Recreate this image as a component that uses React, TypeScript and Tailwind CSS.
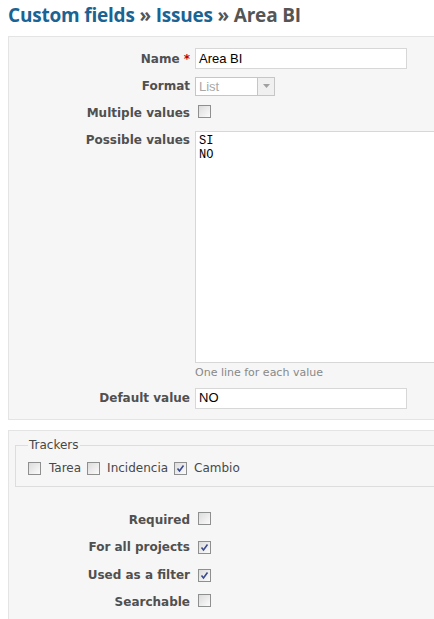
import React from 'react'

const font = { fontFamily: '"DejaVu Sans", Verdana, sans-serif' }

function Check({ checked = false }: { checked?: boolean }) {
  return (
    <span className="inline-flex h-[13px] w-[13px] shrink-0 items-center justify-center border border-[#8e8f8f] bg-gradient-to-br from-[#dcdcdc] to-[#fbfbfb]">
      {checked && (
        <svg width="9" height="9" viewBox="0 0 9 9">
          <path d="M1.5 4.5 L3.5 7 L7.5 1.5" fill="none" stroke="#3b4a8c" strokeWidth="1.6" />
        </svg>
      )}
    </span>
  )
}

function Row({ label, children, required, className = 'h-[27px] items-center' }: { label: string; children: React.ReactNode; required?: boolean; className?: string }) {
  return (
    <div className={`flex ${className}`}>
      <label className="w-[175px] shrink-0 pr-0 text-right text-[12px] font-bold text-[#505050]">
        {label}
        {required && <span className="text-[#bb0000]"> *</span>}
      </label>
      <div className="ml-[5px] flex items-center">{children}</div>
    </div>
  )
}

const flags = [
  { label: 'Required', checked: false },
  { label: 'For all projects', checked: true },
  { label: 'Used as a filter', checked: true },
  { label: 'Searchable', checked: false },
]

export default function App() {
  return (
    <div className="h-[619px] w-[434px] overflow-hidden bg-white" style={font}>
      <h2 className="px-[8px] pt-[3px] text-[19px] leading-[24px] font-bold tracking-[-0.2px] text-[#555]" style={{ fontFamily: '"Open Sans", sans-serif' }}>
        <span className="text-[#1b6393]">Custom fields</span>
        <span> » </span>
        <span className="text-[#1b6393]">Issues</span>
        <span> » Area BI</span>
      </h2>

      {/* main box */}
      <div className="ml-[8px] mt-[9px] w-[480px] border border-[#e4e4e4] bg-[#f6f6f6] pt-[8px] pb-[7px] pl-[6px]">
        <Row label="Name" required>
          <div className="flex h-[21px] w-[212px] items-center border border-[#d7d7d7] bg-white px-[3px] text-[13px] text-black" style={{ fontFamily: '"Liberation Sans", Arial, sans-serif' }}>
            Area BI
          </div>
        </Row>
        <Row label="Format" className="h-[28px] items-center">
          <div className="flex h-[19px] w-[80px] border border-[#c6c6c6] bg-white" style={{ fontFamily: '"Liberation Sans", Arial, sans-serif' }}>
            <span className="flex-1 px-[3px] text-[13px] leading-[17px] text-[#a8a8a8]">List</span>
            <span className="flex w-[17px] items-center justify-center border-l border-[#c6c6c6] bg-[#f0f0f0]">
              <svg width="7" height="4" viewBox="0 0 7 4"><path d="M0 0 H7 L3.5 4 Z" fill="#a0a0a0" /></svg>
            </span>
          </div>
        </Row>
        <Row label="Multiple values" className="h-[26px] items-center">
          <span className="ml-[3px]"><Check /></span>
        </Row>
        <Row label="Possible values" className="items-start pt-[5px]">
          <div className="flex flex-col">
            <div className="h-[232px] w-[280px] border border-[#d7d7d7] bg-white px-[3px] pt-[2px] text-[12px] leading-[14px] text-black" style={{ fontFamily: '"Liberation Mono", "Courier New", monospace' }}>
              <div>SI</div>
              <div>NO</div>
            </div>
          </div>
        </Row>
        <div className="ml-[180px] mt-[3px] text-[11px] leading-[14px] text-[#888]">One line for each value</div>
        <Row label="Default value" className="mt-[4px] h-[28px] items-center">
          <div className="flex h-[21px] w-[212px] items-center border border-[#d7d7d7] bg-white px-[3px] text-[13px] text-black" style={{ fontFamily: '"Liberation Sans", Arial, sans-serif' }}>
            NO
          </div>
        </Row>
      </div>

      {/* second box */}
      <div className="ml-[8px] mt-[10px] w-[480px] border border-[#e4e4e4] bg-[#f6f6f6] pl-[6px] pt-[7px] pb-[10px]">
        <fieldset className="border border-[#dddddd] px-[12px] pb-[9px]">
          <legend className="px-[1px] text-[12px] leading-[14px] text-[#484848]">Trackers</legend>
          <div className="mt-[7px] flex items-center text-[12px] text-[#484848]">
            <Check />
            <span className="ml-[8px] mr-[6px]">Tarea</span>
            <Check />
            <span className="ml-[7px] mr-[6px]">Incidencia</span>
            <Check checked />
            <span className="ml-[7px]">Cambio</span>
          </div>
        </fieldset>
        <div className="mt-[19px]">
          {flags.map((f) => (
            <Row key={f.label} label={f.label} className="h-[27.5px] items-center">
              <span className="ml-[3px]"><Check checked={f.checked} /></span>
            </Row>
          ))}
        </div>
      </div>
    </div>
  )
}
